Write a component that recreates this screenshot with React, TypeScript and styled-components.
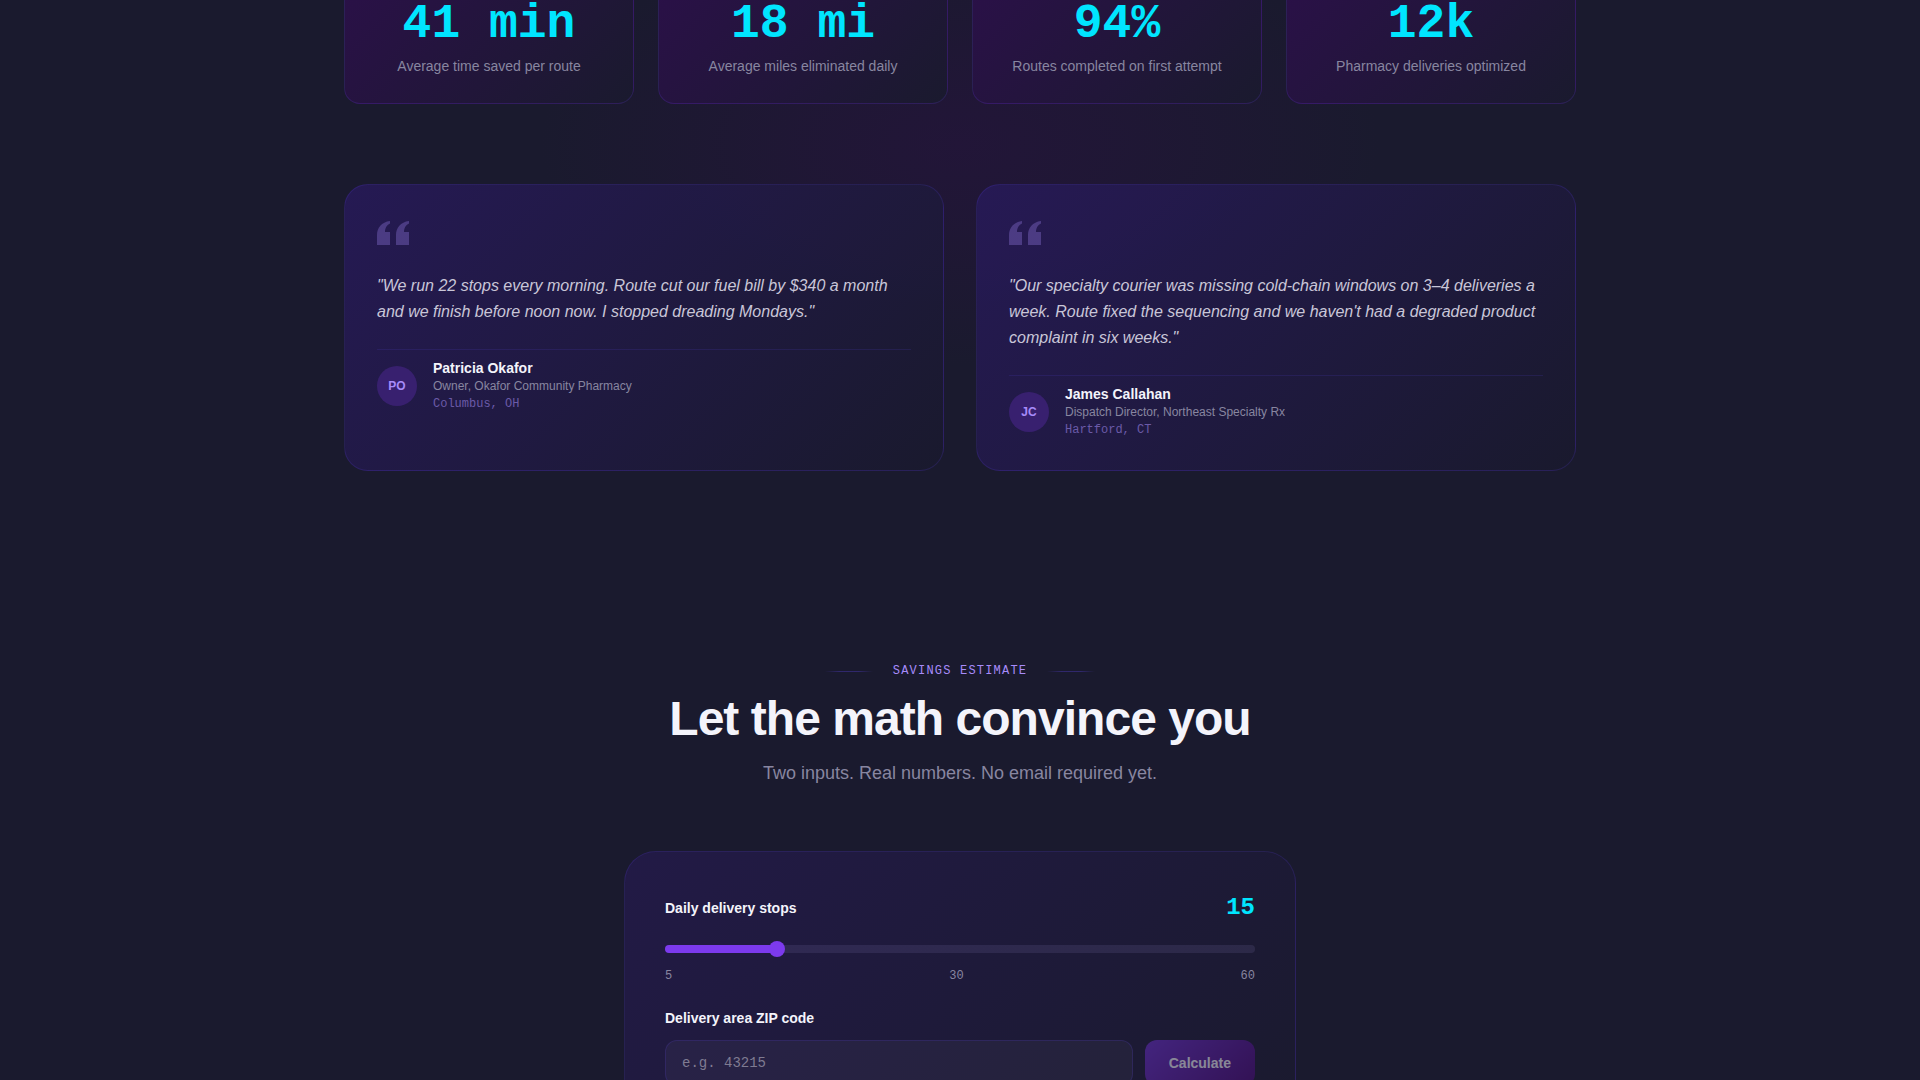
import React, { useState } from "react";
import styled, { createGlobalStyle } from "styled-components";

const sans = '"Liberation Sans", Arial, sans-serif';
const mono = '"Liberation Mono", "Courier New", monospace';
const white = "#f4f4fb";
const muted = "#8886a0";
const line = "rgba(80, 60, 200, 0.22)";

const GlobalStyle = createGlobalStyle`
  *, *::before, *::after { box-sizing: border-box; }
  body { margin: 0; background: #1a1a2e; color: ${white}; font-family: ${sans}; }
  h2, p, blockquote, figure { margin: 0; }
`;

const Page = styled.main`
  height: 100vh;
  overflow: hidden;
  background: #1a1a2e;
`;

const Proof = styled.section`
  margin-top: -36px;
  padding-bottom: 96px;
  background: radial-gradient(
    ellipse 420px 220px at 50% 180px,
    rgba(45, 15, 70, 0.42),
    rgba(45, 15, 70, 0.3) 35%,
    rgba(45, 15, 70, 0)
  );
`;

const Container = styled.div`
  max-width: 1280px;
  margin: 0 auto;
  padding: 0 24px;
`;

const Stats = styled.div`
  display: grid;
  grid-template-columns: repeat(4, 1fr);
  gap: 24px;
  margin-bottom: 80px;
`;

const StatCard = styled.div`
  display: flex;
  flex-direction: column;
  gap: 8px;
  padding: 35px 24px 27px;
  text-align: center;
  border: 1px solid rgba(91, 58, 200, 0.24);
  border-radius: 16px;
  background: linear-gradient(135deg, #2b1049, #1a1a2e);
`;

const StatValue = styled.div`
  font: 700 48px/48px ${mono};
  color: #00e5ff;
`;

const StatLabel = styled.div`
  font-size: 14px;
  line-height: 20px;
  color: ${muted};
`;

const Quotes = styled.div`
  display: grid;
  grid-template-columns: repeat(2, 1fr);
  gap: 32px;
`;

const QuoteCard = styled.figure`
  padding: 36px 32px 31px;
  border: 1px solid ${line};
  border-radius: 24px;
  background: linear-gradient(135deg, rgba(39, 26, 88, 0.9), rgba(26, 26, 46, 0.9));
`;

const QuoteMark = styled.svg`
  display: block;
  width: 32px;
  height: 24px;
  margin-bottom: 28px;
  color: #a78bfa;
  opacity: 0.3;
`;

const QuoteText = styled.blockquote`
  font-size: 16px;
  font-style: italic;
  line-height: 26px;
  color: #c9c6d8;
`;

const Author = styled.figcaption`
  display: flex;
  align-items: center;
  gap: 16px;
  margin-top: 24px;
  padding-top: 9px;
  border-top: 1px solid rgba(80, 60, 200, 0.18);
`;

const Avatar = styled.div`
  display: grid;
  place-items: center;
  width: 40px;
  height: 40px;
  border-radius: 50%;
  background: #38206f;
  color: #a78bfa;
  font-size: 12px;
  font-weight: 700;
`;

const AuthorName = styled.div`
  font-size: 14px;
  font-weight: 700;
  line-height: 18px;
  color: ${white};
`;

const AuthorRole = styled.div`
  font-size: 12px;
  line-height: 18px;
  color: ${muted};
`;

const AuthorPlace = styled.div`
  font: 12px/18px ${mono};
  color: #6b5aa8;
`;

const Estimate = styled.section`
  padding-top: 96px;
`;

const Eyebrow = styled.p`
  display: flex;
  align-items: center;
  justify-content: center;
  gap: 20px;
  font: 12px/16px ${mono};
  letter-spacing: 0.1em;
  text-transform: uppercase;
  color: #a78bfa;

  &::before,
  &::after {
    content: "";
    width: 48px;
    height: 1px;
    background: linear-gradient(90deg, transparent, rgba(80, 60, 200, 0.4) 30% 70%, transparent);
  }
`;

const Title = styled.h2`
  margin-top: 16px;
  text-align: center;
  font-size: 48px;
  line-height: 48px;
  letter-spacing: -0.02em;
  color: ${white};
`;

const Subtitle = styled.p`
  margin-top: 16px;
  text-align: center;
  font-size: 18px;
  line-height: 28px;
  color: ${muted};
`;

const Calculator = styled.form`
  max-width: 672px;
  margin: 64px auto 0;
  padding: 40px;
  border: 1px solid ${line};
  border-radius: 32px;
  background: linear-gradient(135deg, #221a46, #1a1a2e);
`;

const FieldHead = styled.div`
  display: flex;
  align-items: center;
  justify-content: space-between;
  height: 32px;
`;

const FieldLabel = styled.label`
  font-size: 14px;
  font-weight: 700;
  line-height: 20px;
  color: ${white};
`;

const StopsValue = styled.output`
  font: 700 24px/32px ${mono};
  color: #00e5ff;
`;

const Slider = styled.input`
  display: block;
  appearance: none;
  width: 100%;
  height: 8px;
  margin: 21px 0 0;
  border-radius: 4px;
  cursor: pointer;

  &::-webkit-slider-thumb {
    appearance: none;
    width: 16px;
    height: 16px;
    border-radius: 50%;
    background: #7c3aed;
  }
`;

const Ticks = styled.div`
  display: flex;
  justify-content: space-between;
  margin: 15px 0 24px;
  font: 12px/16px ${mono};
  color: ${muted};
`;

const ZipRow = styled.div`
  display: flex;
  gap: 12px;
  margin-top: 12px;
`;

const ZipInput = styled.input`
  flex: 1;
  min-width: 0;
  height: 46px;
  padding: 0 16px;
  border: 1px solid ${line};
  border-radius: 12px;
  background: rgba(255, 255, 255, 0.04);
  color: ${white};
  font: 14px/20px ${mono};

  &::placeholder { color: #7f7b92; }
`;

const CalculateButton = styled.button`
  padding: 0 24px;
  border: 0;
  border-radius: 12px;
  background: linear-gradient(135deg, #6b2fc9, #4a0a78);
  color: ${white};
  font: 700 14px/20px ${sans};

  &:disabled { opacity: 0.5; }
`;

const stats = [
  { value: "41 min", label: "Average time saved per route" },
  { value: "18 mi", label: "Average miles eliminated daily" },
  { value: "94%", label: "Routes completed on first attempt" },
  { value: "12k", label: "Pharmacy deliveries optimized" },
];

const quotes = [
  {
    text: '"We run 22 stops every morning. Route cut our fuel bill by $340 a month and we finish before noon now. I stopped dreading Mondays."',
    initials: "PO",
    name: "Patricia Okafor",
    role: "Owner, Okafor Community Pharmacy",
    place: "Columbus, OH",
  },
  {
    text: '"Our specialty courier was missing cold-chain windows on 3–4 deliveries a week. Route fixed the sequencing and we haven\'t had a degraded product complaint in six weeks."',
    initials: "JC",
    name: "James Callahan",
    role: "Dispatch Director, Northeast Specialty Rx",
    place: "Hartford, CT",
  },
];

const MIN_STOPS = 5;
const MAX_STOPS = 60;

export default function App() {
  const [stops, setStops] = useState(15);
  const [zip, setZip] = useState("");
  const filled = ((stops - MIN_STOPS) / (MAX_STOPS - MIN_STOPS)) * 100;

  return (
    <>
      <GlobalStyle />
      <Page>
        <Proof>
          <Container>
            <Stats>
              {stats.map((s) => (
                <StatCard key={s.label}>
                  <StatValue>{s.value}</StatValue>
                  <StatLabel>{s.label}</StatLabel>
                </StatCard>
              ))}
            </Stats>
            <Quotes>
              {quotes.map((q) => (
                <QuoteCard key={q.name}>
                  <QuoteMark viewBox="0 0 32 24" fill="currentColor" aria-hidden="true">
                    <path d="M0 24V14C0 7 4.500 1 13 0v2.500C9.500 4 8 7.500 8 11h5v13zM19 24V14c0-7 4.500-13 13-14v2.500c-3.500 1.500-5 5-5 8.500h5v13z" />
                  </QuoteMark>
                  <QuoteText>{q.text}</QuoteText>
                  <Author>
                    <Avatar>{q.initials}</Avatar>
                    <div>
                      <AuthorName>{q.name}</AuthorName>
                      <AuthorRole>{q.role}</AuthorRole>
                      <AuthorPlace>{q.place}</AuthorPlace>
                    </div>
                  </Author>
                </QuoteCard>
              ))}
            </Quotes>
          </Container>
        </Proof>
        <Estimate>
          <Container>
            <Eyebrow>Savings estimate</Eyebrow>
            <Title>Let the math convince you</Title>
            <Subtitle>Two inputs. Real numbers. No email required yet.</Subtitle>
            <Calculator onSubmit={(e) => e.preventDefault()}>
              <FieldHead>
                <FieldLabel htmlFor="stops">Daily delivery stops</FieldLabel>
                <StopsValue htmlFor="stops">{stops}</StopsValue>
              </FieldHead>
              <Slider
                id="stops"
                type="range"
                min={MIN_STOPS}
                max={MAX_STOPS}
                value={stops}
                onChange={(e) => setStops(Number(e.target.value))}
                style={{
                  background: `linear-gradient(to right, #7c3aed ${filled}%, rgba(130, 120, 180, 0.16) ${filled}%)`,
                }}
              />
              <Ticks>
                <span>5</span>
                <span>30</span>
                <span>60</span>
              </Ticks>
              <FieldLabel htmlFor="zip">Delivery area ZIP code</FieldLabel>
              <ZipRow>
                <ZipInput
                  id="zip"
                  type="text"
                  placeholder="e.g. 43215"
                  value={zip}
                  onChange={(e) => setZip(e.target.value)}
                />
                <CalculateButton type="submit" disabled={zip.length < 5}>
                  Calculate
                </CalculateButton>
              </ZipRow>
            </Calculator>
          </Container>
        </Estimate>
      </Page>
    </>
  );
}
